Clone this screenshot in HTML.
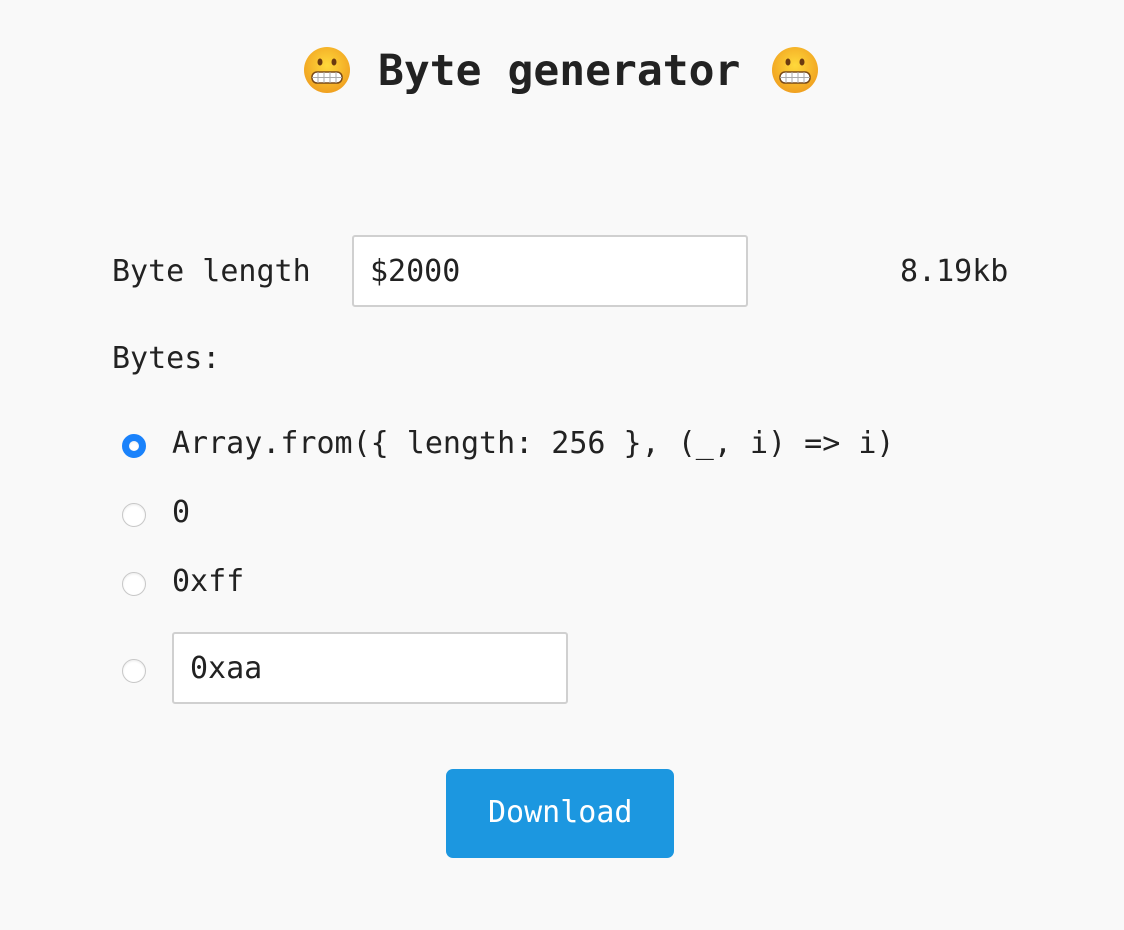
<!DOCTYPE html>
<html><head><style>
body{margin:0;width:1124px;height:930px;background:#f9f9f9;font-family:"DejaVu Sans Mono","Liberation Mono",monospace;color:#222;position:relative;overflow:hidden}
.a{position:absolute;white-space:pre;line-height:1}
.inp{position:absolute;background:#fff;border:2px solid #d0d0d0;border-radius:3px;box-sizing:border-box}
.r{position:absolute;width:24px;height:24px;border-radius:50%;box-sizing:border-box;border:1px solid #c8c8c8;background:#fff;box-shadow:inset 0 1px 2px rgba(0,0,0,.08)}
</style></head><body>
<svg class="a" style="left:302px;top:45px" width="50" height="50" viewBox="0 0 50 50"><defs><radialGradient id="g" cx="50%" cy="40%" r="60%"><stop offset="0" stop-color="#ffd93b"/><stop offset="1" stop-color="#f0a020"/></radialGradient></defs><circle cx="25" cy="25" r="23" fill="url(#g)"/><ellipse cx="18" cy="17" rx="2.5" ry="3.5" fill="#6b3a10"/><ellipse cx="32" cy="17" rx="2.5" ry="3.5" fill="#6b3a10"/><rect x="10" y="27" width="30" height="11" rx="5" fill="#fff" stroke="#7a4a18" stroke-width="1.5"/><path d="M10 32.5H40M16 27v11M22 27v11M28 27v11M34 27v11" stroke="#aaa" stroke-width="1"/></svg>
<svg class="a" style="left:770px;top:45px" width="50" height="50" viewBox="0 0 50 50"><circle cx="25" cy="25" r="23" fill="url(#g)"/><ellipse cx="18" cy="17" rx="2.5" ry="3.5" fill="#6b3a10"/><ellipse cx="32" cy="17" rx="2.5" ry="3.5" fill="#6b3a10"/><rect x="10" y="27" width="30" height="11" rx="5" fill="#fff" stroke="#7a4a18" stroke-width="1.5"/><path d="M10 32.5H40M16 27v11M22 27v11M28 27v11M34 27v11" stroke="#aaa" stroke-width="1"/></svg>
<div class="a" style="left:378px;top:50px;font-size:43px;font-weight:bold">Byte generator</div>
<div class="a" style="left:112px;top:257px;font-size:30px">Byte length</div>
<div class="inp" style="left:352px;top:235px;width:396px;height:72px"></div>
<div class="a" style="left:370px;top:257px;font-size:30px">$2000</div>
<div class="a" style="left:900px;top:257px;font-size:30px">8.19kb</div>
<div class="a" style="left:112px;top:344px;font-size:30px">Bytes:</div>
<div class="r" style="left:122px;top:434px;border:7px solid #1a82fb;background:#fff"></div>
<div class="a" style="left:172px;top:429px;font-size:30px">Array.from({ length: 256 }, (_, i) =&gt; i)</div>
<div class="r" style="left:122px;top:503px"></div>
<div class="a" style="left:172px;top:498px;font-size:30px">0</div>
<div class="r" style="left:122px;top:572px"></div>
<div class="a" style="left:172px;top:567px;font-size:30px">0xff</div>
<div class="r" style="left:122px;top:659px"></div>
<div class="inp" style="left:172px;top:632px;width:396px;height:72px"></div>
<div class="a" style="left:190px;top:654px;font-size:30px">0xaa</div>
<div class="a" style="left:446px;top:769px;width:228px;height:89px;background:#1c97e0;border-radius:7px"></div>
<div class="a" style="left:488px;top:798px;font-size:30px;color:#fff">Download</div>
</body></html>
